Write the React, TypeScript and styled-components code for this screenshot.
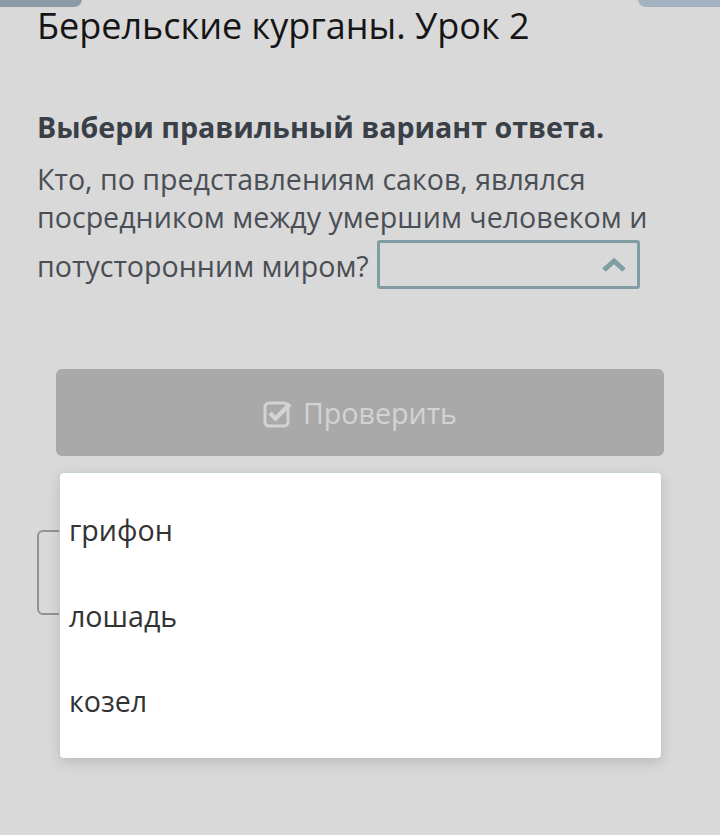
import React from "react";
import styled, { createGlobalStyle } from "styled-components";

const Global = createGlobalStyle`
  html, body { margin: 0; padding: 0; background: #d9d9d9; }
  body { font-family: "Open Sans", "Noto Sans", sans-serif; }
  * { box-sizing: border-box; }
`;

const Page = styled.div`
  position: relative;
  width: 720px;
  height: 835px;
  background: #d9d9d9;
  overflow: hidden;
`;

const Tab = styled.div<{ $side: "left" | "right" }>`
  position: absolute;
  top: -10px;
  ${(p) => (p.$side === "left" ? "left: -10px;" : "right: -10px;")}
  width: 92px;
  height: 17px;
  border-radius: 8px;
  background: ${(p) => (p.$side === "left" ? "#8d9ba6" : "#a3b3c1")};
`;

const Content = styled.div`
  padding: 2px 37px 0 37px;
  display: flex;
  flex-direction: column;
`;

const Title = styled.h1`
  margin: 0;
  font-weight: 400;
  font-size: 36px;
  line-height: 48px;
  color: #151515;
`;

const Instruction = styled.div`
  margin-top: 59px;
  font-weight: 700;
  font-size: 28.6px;
  line-height: 36px;
  color: #3a4048;
`;

const Question = styled.div`
  margin-top: 15px;
  font-size: 28.6px;
  line-height: 38px;
  color: #4a4f56;
`;

const SelectBox = styled.span`
  display: inline-block;
  overflow: hidden;
  vertical-align: -12.5px;
  margin: 4px 0 0 8px;
  width: 263px;
  height: 49px;
  border: 3px solid #7f9da3;
  border-radius: 3px;
  padding: 0 10px 0 0;
`;

const SelectInner = styled.span`
  display: flex;
  height: 100%;
  align-items: center;
  justify-content: flex-end;
`;

const CheckButton = styled.div`
  margin: 80px 19px 0 19px;
  height: 87px;
  border-radius: 6px;
  background: #a9a9a9;
  display: flex;
  align-items: center;
  justify-content: center;
  gap: 10px;
  font-size: 28.6px;
  color: #d3d3d3;
`;

const Hidden = styled.div`
  position: absolute;
  left: 37px;
  top: 530px;
  width: 300px;
  height: 85px;
  border: 2px solid #8f9497;
  border-radius: 6px;
`;

const Dropdown = styled.div`
  position: absolute;
  left: 60px;
  top: 473px;
  width: 601px;
  height: 285px;
  background: #fff;
  border-radius: 4px;
  box-shadow: 0 4px 14px rgba(0, 0, 0, 0.15), 0 0 0 1px #cfdcdc;
  display: flex;
  flex-direction: column;
  padding-top: 35px;
`;

const Option = styled.div`
  height: 85.5px;
  flex: 0 0 85.5px;
  padding-left: 9px;
  font-size: 28.6px;
  line-height: 44px;
  color: #333;
`;

export default function App() {
  return (
    <Page>
      <Global />
      <Tab $side="left" />
      <Tab $side="right" />
      <Content>
        <Title>Берельские курганы. Урок 2</Title>
        <Instruction>Выбери правильный вариант ответа.</Instruction>
        <Question>
          Кто, по представлениям саков, являлся посредником между умершим
          человеком и потусторонним миром?
          <SelectBox>
            <SelectInner>
              <svg width="26" height="16" viewBox="0 0 26 16">
                <path d="M3 13 L13 4 L23 13" fill="none" stroke="#7f9da3" strokeWidth="5" />
              </svg>
            </SelectInner>
          </SelectBox>
        </Question>
        <CheckButton>
          <svg width="30" height="30" viewBox="0 0 30 30">
            <rect x="2" y="5" width="23" height="23" rx="4" fill="none" stroke="#d3d3d3" strokeWidth="3" />
            <path d="M7 15 L12.5 20.5 L27 6" fill="none" stroke="#d3d3d3" strokeWidth="4.5" />
          </svg>
          Проверить
        </CheckButton>
      </Content>
      <Hidden />
      <Dropdown>
        <Option>грифон</Option>
        <Option>лошадь</Option>
        <Option>козел</Option>
      </Dropdown>
    </Page>
  );
}
